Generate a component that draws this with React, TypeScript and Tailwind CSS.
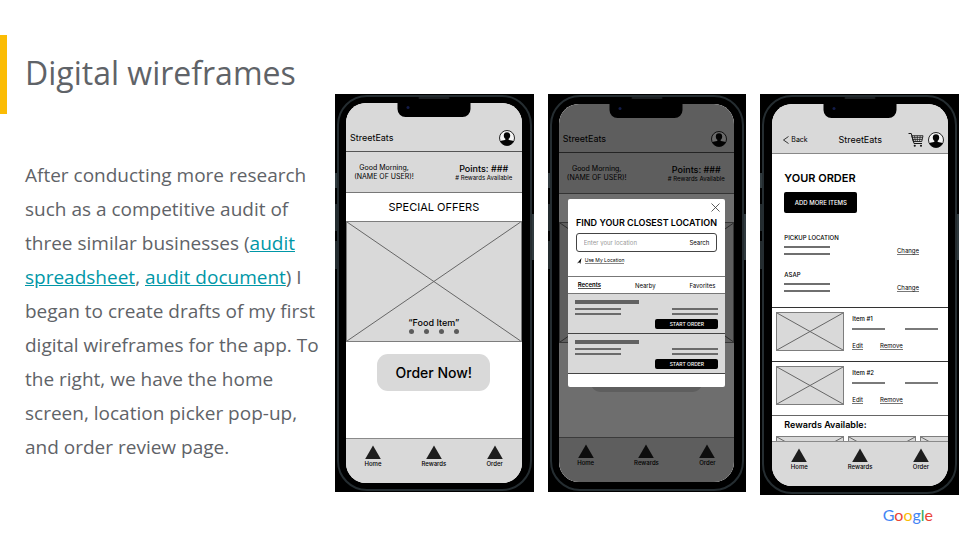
import type { ReactNode } from "react";

function CrossBox({ className }: { className: string }) {
  return (
    <svg
      className={`block border border-[#7d7d7d] bg-[#d9d9d9] ${className}`}
      viewBox="0 0 100 100"
      preserveAspectRatio="none"
      aria-hidden="true"
    >
      <path
        d="M0 0L100 100M100 0L0 100"
        stroke="#666"
        strokeWidth="1"
        vectorEffect="non-scaling-stroke"
        fill="none"
      />
    </svg>
  );
}

function ProfileIcon() {
  return (
    <svg className="size-4 shrink-0" viewBox="0 0 32 32" aria-hidden="true">
      <circle cx="16" cy="16" r="15" fill="#f4f4f4" stroke="#111" strokeWidth="1.8" />
      <path
        d="M2.600 22.600C4.500 20.600 9 20.800 12 19.800c1-.4 1.200-1.400.6-2.200C10.800 16 9.600 13.600 9.600 10.800 9.600 7 12.200 4.600 16 4.600s6.400 2.400 6.400 6.200c0 2.800-1.200 5.200-3 6.800-.6.8-.4 1.800.6 2.200 3 1 7.500.8 9.400 2.800C27.500 27.700 22 31 16 31S4.500 27.700 2.600 22.600z"
        fill="#050505"
      />
    </svg>
  );
}

function CartIcon() {
  return (
    <svg className="size-4 shrink-0" viewBox="0 0 32 32" fill="none" stroke="#161616" aria-hidden="true">
      <path d="M1 3h5.500l5.500 20h16" strokeWidth="2" />
      <path d="M7.500 7.500H30l-2.500 11.500H10.500z" strokeWidth="1.800" />
      <path d="M8.500 11.200h20.600M9.500 15h18.800M13 7.500l1.800 11.500M18.600 7.500V19M24.400 7.500L23 19" strokeWidth="1.400" />
      <circle cx="13.500" cy="27.500" r="2.200" fill="#161616" stroke="none" />
      <circle cx="26" cy="27.500" r="2.200" fill="#161616" stroke="none" />
    </svg>
  );
}

function Phone({ className, children }: { className: string; children: ReactNode }) {
  return (
    <article className={`relative flex flex-col bg-black font-[Inter,'Liberation_Sans',sans-serif] text-black ${className}`}>
      <span className="absolute top-px bottom-px left-[2px] right-[2px] rounded-[30px] border-2 border-[#252d31]" />
      <span className="absolute top-[79px] left-0 h-[15px] w-[2px] bg-[#2f393d]" />
      <span className="absolute top-[110px] left-0 h-[27px] w-[2px] bg-[#232b2e]" />
      <span className="absolute top-[147px] left-0 h-[28px] w-[2px] bg-[#232b2e]" />
      <span className="absolute top-[120px] right-0 h-[46px] w-[2px] bg-[#2f393d]" />
      <div className="relative flex flex-1 flex-col overflow-hidden rounded-[20px] bg-white">
        {children}
        <span className="absolute top-0 left-1/2 h-[14px] w-[73px] -translate-x-1/2 rounded-b-[8px] bg-black">
          <span className="absolute top-[3px] left-[9px] size-[3px] rounded-full bg-[#131c4a]" />
        </span>
      </div>
      <span className="absolute top-[3px] left-1/2 h-[2px] w-[31px] -translate-x-1/2 rounded-full bg-[#1b1f21]" />
    </article>
  );
}

function NavBar() {
  return (
    <nav className="flex h-[45px] shrink-0 justify-between border-t border-[#8a8a8a] bg-[#d9d9d9] px-3 pt-[6px]">
      {["Home", "Rewards", "Order"].map((label) => (
        <button key={label} type="button" className="flex w-[30px] flex-col items-center">
          <svg className="h-[14px] w-4" viewBox="0 0 16 14" aria-hidden="true">
            <path d="M8 0.500L15.800 14H0.200z" fill="#1e1e1e" />
          </svg>
          <span className="text-[6px] leading-[9px] font-medium">{label}</span>
        </button>
      ))}
    </nav>
  );
}

function HomeScreen() {
  return (
    <>
      <header className="flex h-[49px] shrink-0 items-end justify-between border-b border-[#555] bg-[#d9d9d9] pr-[7px] pb-[5px] pl-1">
        <span className="text-[9px] leading-4">StreetEats</span>
        <ProfileIcon />
      </header>
      <div className="flex h-[41px] shrink-0 items-center justify-between border-b border-[#777] bg-[#d9d9d9] pr-2 pl-[5px] text-center">
        <p className="w-[66px] text-[7px] leading-[9px] whitespace-nowrap">
          Good Morning,
          <br />
          (NAME OF USER)!
        </p>
        <div className="w-[60px] whitespace-nowrap">
          <p className="text-[9px] leading-[10px] font-medium">Points: ###</p>
          <p className="text-[6px] leading-[7px]"># Rewards Available</p>
        </div>
      </div>
      <h2 className="h-[28px] shrink-0 text-center text-[11px] leading-[28px]">SPECIAL OFFERS</h2>
      <div className="relative h-[121px] shrink-0">
        <CrossBox className="h-full w-full" />
        <div className="absolute inset-x-0 bottom-[8px] flex flex-col items-center">
          <p className="text-[9px] leading-[12px] font-medium">“Food Item”</p>
          <div className="flex gap-[10px]">
            {[0, 1, 2, 3].map((dot) => (
              <span key={dot} className="size-[5px] rounded-full bg-[#5c5c5c]" />
            ))}
          </div>
        </div>
      </div>
      <div className="flex-1 pt-3 text-center">
        <button type="button" className="h-[37px] w-[113px] rounded-[11px] bg-[#d9d9d9] text-[14px] font-medium">
          Order Now!
        </button>
      </div>
      <NavBar />
    </>
  );
}

function LocationRow() {
  return (
    <li className="flex h-[40px] flex-col border-b border-[#444] bg-[#d9d9d9] px-[7px] pt-[6px]">
      <span className="h-[4px] w-[64px] bg-[#626262]" />
      <div className="mt-[4px] flex justify-between">
        {[0, 1].map((column) => (
          <div key={column} className="flex w-[46px] flex-col gap-[3px]">
            <span className="h-[2px] bg-[#6b6b6b]" />
            <span className="h-[2px] bg-[#6b6b6b]" />
          </div>
        ))}
      </div>
      <button type="button" className="mt-[4px] h-[10px] w-[63px] self-end rounded-[2px] bg-black text-[5px] leading-[10px] font-medium text-white">
        START ORDER
      </button>
    </li>
  );
}

function LocationPicker() {
  return (
    <>
      <div className="absolute inset-0 bg-black/57" />
      <div role="dialog" aria-label="Find your closest location" className="absolute top-[95px] right-[9px] left-[9px] flex h-[188px] flex-col rounded-[2px] bg-white">
        <button type="button" aria-label="Close" className="mt-1 mr-[5px] self-end">
          <svg className="size-[9px]" viewBox="0 0 9 9" aria-hidden="true">
            <path d="M0.500 0.500L8.500 8.500M8.500 0.500L0.500 8.500" stroke="#333" strokeWidth="0.800" />
          </svg>
        </button>
        <h2 className="mt-[5px] text-center text-[9px] leading-[12px] font-semibold whitespace-nowrap">FIND YOUR CLOSEST LOCATION</h2>
        <form className="mx-[8px] mt-[4px] flex h-[19px] items-center rounded-[3px] border border-[#444] px-[7px]">
          <input
            type="text"
            aria-label="Enter your location"
            placeholder="Enter your location"
            className="w-0 flex-1 text-[6px] leading-[8px] placeholder:text-[#999]"
          />
          <button type="button" className="text-[6px] leading-[8px]">
            Search
          </button>
        </form>
        <button type="button" className="mt-[4px] ml-[9px] flex h-[10px] items-center gap-[3px]">
          <svg className="h-[6px] w-[5px]" viewBox="0 0 5 6" aria-hidden="true">
            <path d="M4.500 0L3.300 6L2.300 4.300L0 5.600z" fill="#000" />
          </svg>
          <span className="border-b border-[#888] text-[5px] leading-[5px]">Use My Location</span>
        </button>
        <div className="mt-[10px] flex h-[18px] items-center justify-between border-y border-[#777] px-[10px] text-[6px] leading-[7px]">
          <button type="button" className="border-b border-[#555] font-semibold">
            Recents
          </button>
          <button type="button">Nearby</button>
          <button type="button">Favorites</button>
        </div>
        <ul>
          <LocationRow />
          <LocationRow />
        </ul>
      </div>
    </>
  );
}

function PickupBlock({ title }: { title: string }) {
  return (
    <section className="h-[37px] text-[6px]">
      <h3 className="leading-[8px] font-medium">{title}</h3>
      <div className="mt-[4px] flex items-center justify-between">
        <div className="flex w-[46px] flex-col gap-[5px]">
          <span className="h-[2px] bg-[#6f6f6f]" />
          <span className="h-[2px] bg-[#6f6f6f]" />
        </div>
        <button type="button" className="border-b border-[#777] leading-[7px]">
          Change
        </button>
      </div>
    </section>
  );
}

function OrderItem({ name }: { name: string }) {
  return (
    <li className="flex h-[54px] gap-2 border-t border-[#333] pt-[4px] pr-[10px] pl-1 text-[6px]">
      <CrossBox className="h-[39px] w-[68px]" />
      <div className="flex-1">
        <p className="mt-[3px] leading-[8px] font-medium">{name}</p>
        <div className="mt-[5px] flex justify-between">
          <span className="h-[2px] w-[33px] bg-[#7a7a7a]" />
          <span className="h-[2px] w-[33px] bg-[#7a7a7a]" />
        </div>
        <div className="mt-[12px] flex gap-[17px] leading-[7px]">
          <button type="button" className="border-b border-[#777]">
            Edit
          </button>
          <button type="button" className="border-b border-[#777]">
            Remove
          </button>
        </div>
      </div>
    </li>
  );
}

function OrderScreen() {
  return (
    <>
      <header className="flex h-[50px] shrink-0 items-end border-b border-[#888] bg-[#d9d9d9] px-[4px] pb-[5px]">
        <div className="flex flex-1">
          <button type="button" className="ml-[7px] flex items-center gap-[2px] text-[7px] leading-4">
            <svg className="h-[8px] w-[6px]" viewBox="0 0 6 8" aria-hidden="true">
              <path d="M5.500 0.500L0.500 4L5.500 7.500" fill="none" stroke="#222" strokeWidth="0.900" />
            </svg>
            Back
          </button>
        </div>
        <span className="text-[9px] leading-4">StreetEats</span>
        <div className="flex flex-1 justify-end gap-[4px]">
          <CartIcon />
          <ProfileIcon />
        </div>
      </header>
      <div className="h-[153px] shrink-0 pt-[17px] pr-[29px] pl-3">
        <h2 className="text-[11px] leading-[14px] font-semibold">YOUR ORDER</h2>
        <button type="button" className="mt-[7px] mb-[21px] block h-[21px] w-[73px] rounded-[2px] bg-black text-[6px] font-medium text-white">
          ADD MORE ITEMS
        </button>
        <PickupBlock title="PICKUP LOCATION" />
        <PickupBlock title="ASAP" />
      </div>
      <ul className="shrink-0">
        <OrderItem name="Item #1" />
        <OrderItem name="Item #2" />
      </ul>
      <section className="h-[26px] overflow-hidden border-t border-[#666]">
        <h3 className="mb-[2px] pl-3 text-[9px] leading-[18px] font-semibold">Rewards Available:</h3>
        <div className="flex gap-[4px] pl-1">
          {[0, 1, 2].map((card) => (
            <CrossBox key={card} className="h-[39px] w-[68px] shrink-0" />
          ))}
        </div>
      </section>
      <NavBar />
    </>
  );
}

export default function App() {
  return (
    <div className="min-h-screen bg-white font-['Open_Sans','Noto_Sans',sans-serif] text-[#5f6368]">
      <main className="flex">
        <section className="w-[335px] shrink-0 pt-[35px]">
          <h1 className="flex h-[79px] items-center border-l-[7px] border-[#fbbc04] pb-[4px] pl-[18px] text-[32px] whitespace-nowrap">
            Digital wireframes
          </h1>
          <p className="mt-[44px] pr-[14px] pl-[25px] text-[19px] leading-[34px]">
            After conducting more research such as a competitive audit of three similar businesses (
            <a href="#spreadsheet" className="text-[#0097a7] underline">
              audit spreadsheet
            </a>
            ,{" "}
            <a href="#document" className="text-[#0097a7] underline">
              audit document
            </a>
            ) I began to create drafts of my first digital wireframes for the app. To the right, we have the home
            screen, location picker pop-up, and order review page.
          </p>
        </section>
        <div className="grid flex-1 grid-cols-3 items-start gap-[14px] pt-[94px] pr-px">
          <Phone className="h-[398px] pt-[9px] pr-3 pb-[9px] pl-[11px]">
            <HomeScreen />
          </Phone>
          <Phone className="h-[398px] py-[10px] pr-3 pl-[11px]">
            <HomeScreen />
            <LocationPicker />
          </Phone>
          <Phone className="h-[401px] pt-[10px] pr-[11px] pb-[9px] pl-3">
            <OrderScreen />
          </Phone>
        </div>
      </main>
      <footer className="flex justify-end pt-[8px] pr-[27px]">
        <span className="font-[Lato,sans-serif] text-[16px] leading-6">
          <span className="text-[#4285f4]">G</span>
          <span className="text-[#ea4335]">o</span>
          <span className="text-[#fbbc04]">o</span>
          <span className="text-[#4285f4]">g</span>
          <span className="text-[#34a853]">l</span>
          <span className="text-[#ea4335]">e</span>
        </span>
      </footer>
    </div>
  );
}
